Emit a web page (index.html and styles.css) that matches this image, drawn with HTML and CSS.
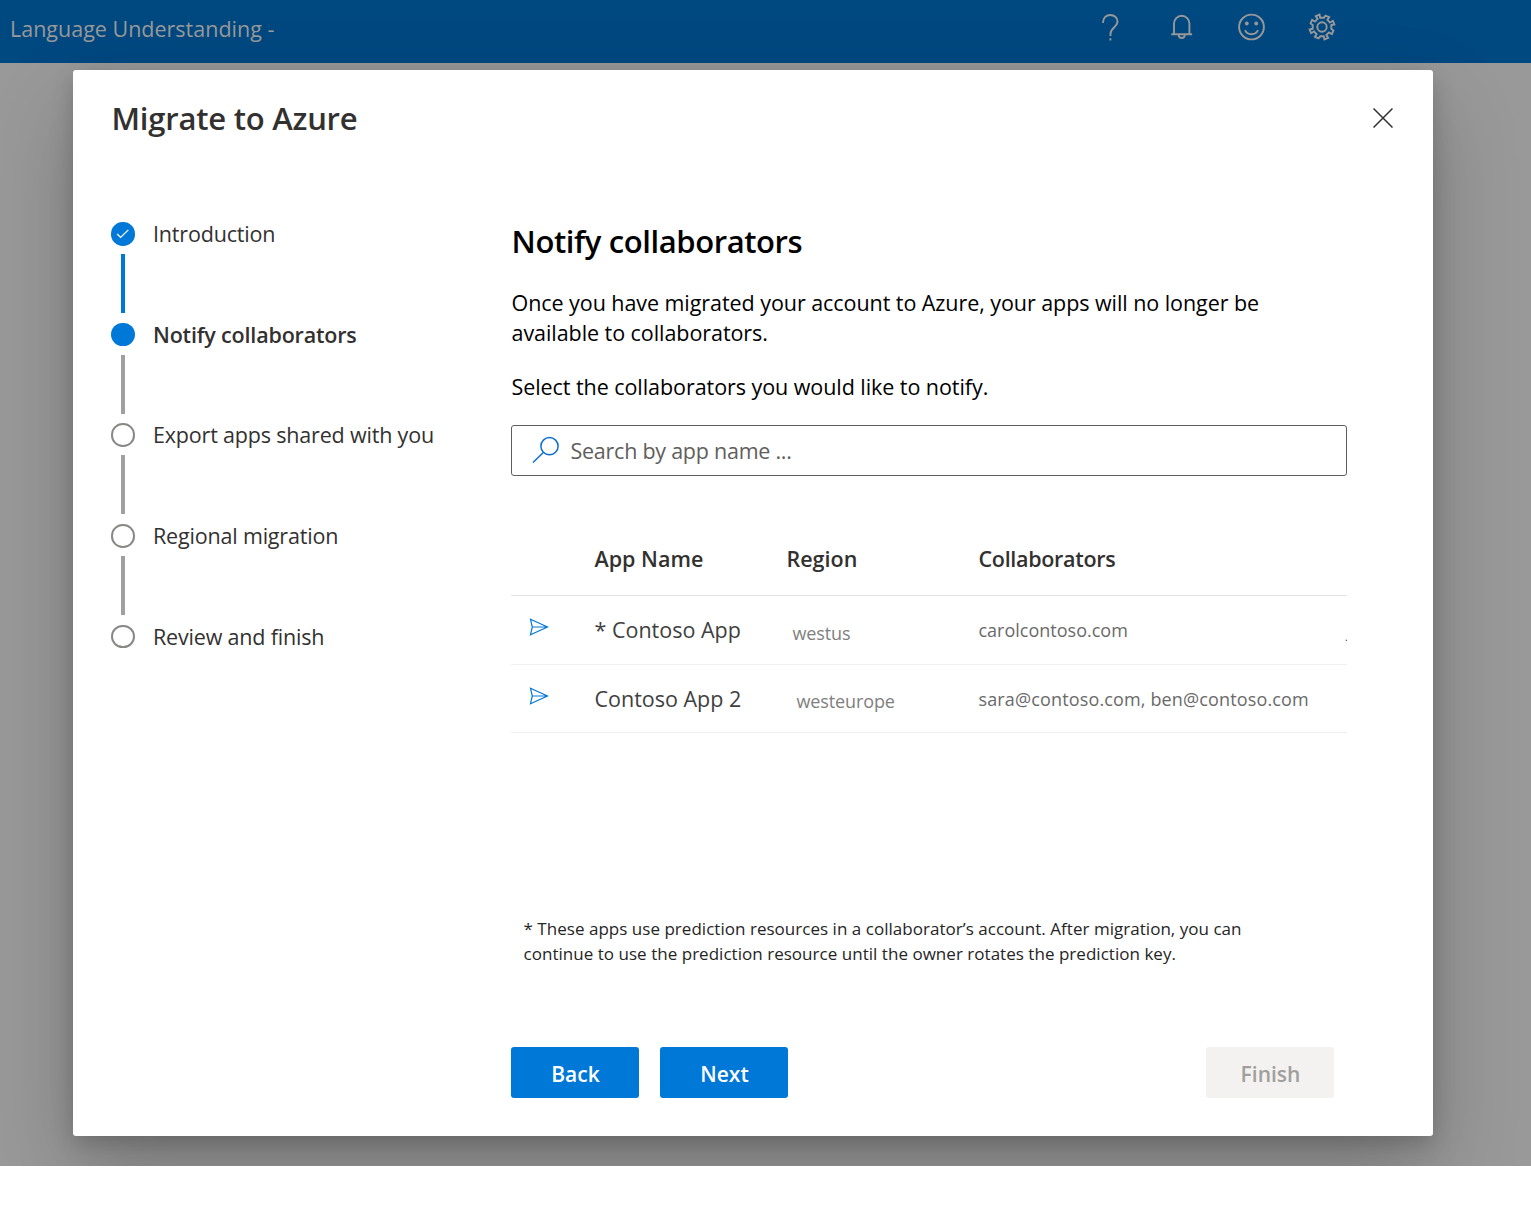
FILE: index.html
```html
<!DOCTYPE html>
<html lang="en">
<head>
<meta charset="utf-8">
<title>Language Understanding</title>
<link rel="stylesheet" href="styles.css">
</head>
<body>
<div class="app">
  <header class="topbar">
    <span class="brand">Language Understanding -</span>
    <nav class="tools">
      <svg class="tool" viewBox="0 0 30 30"><path d="M8 11C8 5.500 11.500 3 15.300 3s7.200 2.600 7.200 6.600c0 5.400-7 6.400-7 12V24M15.400 26.200v2.200"/></svg>
      <svg class="tool" viewBox="0 0 30 30"><path d="M5.300 22.300h20.800M8 22.300V11.500a7.700 7.700 0 0 1 15.400 0v10.800M12.700 23a3 3 0 0 0 6 0"/></svg>
      <svg class="tool" viewBox="0 0 30 30"><circle cx="15.500" cy="15" r="12.400"/><path d="M9 18.200a7.200 7.200 0 0 0 13 0"/><circle class="dot" cx="10.800" cy="11.500" r="1.900"/><circle class="dot" cx="20.200" cy="11.500" r="1.900"/></svg>
      <svg class="tool" viewBox="0 0 30 30"><circle cx="15" cy="15" r="4.700"/><path d="M13.200 5.800 12.500 2.600 8.800 4.100 10.600 6.900 7.900 9.600 5.100 7.800 3.600 11.400 5.700 12.900V16.700L2.600 17.500 4.100 21.200 7 19.500 9.600 22.100 7.900 24.900 11.500 26.400 13.300 24.300H16.700L17.500 27.400 21.200 25.900 19.400 23 22.100 20.400 24.900 22.100 26.400 18.500 24.300 16.800V13.100L27.400 12.500 25.900 8.800 23 10.600 20.400 7.900 22.200 5.100 18.500 3.600 16.900 5.800Z"/></svg>
    </nav>
  </header>
  <main class="stage">
    <section class="dialog">
      <div class="dialog-head">
        <h1 class="title">Migrate to Azure</h1>
        <svg class="close" viewBox="0 0 20 20"><path d="M.5.500l19 19M19.500.500l-19 19"/></svg>
      </div>
      <div class="dialog-body">
        <ol class="steps">
          <li class="step done"><span class="mark"><svg viewBox="0 0 24 24"><path d="M6.300 12.300l3.500 3.500L17.700 8"/></svg></span><span class="label">Introduction</span></li>
          <li class="step current"><span class="mark"></span><span class="label">Notify collaborators</span></li>
          <li class="step"><span class="mark"></span><span class="label">Export apps shared with you</span></li>
          <li class="step"><span class="mark"></span><span class="label">Regional migration</span></li>
          <li class="step"><span class="mark"></span><span class="label">Review and finish</span></li>
        </ol>
        <div class="content">
          <h2 class="heading">Notify collaborators</h2>
          <p class="intro">Once you have migrated your account to Azure, your apps will no longer be<br>available to collaborators.</p>
          <p class="intro">Select the collaborators you would like to notify.</p>
          <div class="search">
            <svg viewBox="0 0 28 28"><circle cx="17.500" cy="10.200" r="8.600"/><path d="M11.300 16.500L1 26.500"/></svg>
            <span>Search by app name ...</span>
          </div>
          <div class="table">
            <div class="row head"><span></span><span>App Name</span><span>Region</span><span class="last">Collaborators</span></div>
            <div class="row">
              <svg class="send" viewBox="0 0 20 18"><path d="M1.500 1.300L18.500 9 1.500 16.700 3.300 9zM3.300 9h15"/></svg>
              <span class="name">* Contoso App</span><span class="region">westus</span><span class="people">carolcontoso.com</span><span class="more">.</span>
            </div>
            <div class="row short">
              <svg class="send" viewBox="0 0 20 18"><path d="M1.500 1.300L18.500 9 1.500 16.700 3.300 9zM3.300 9h15"/></svg>
              <span class="name">Contoso App 2</span><span class="region">westeurope</span><span class="people">sara@contoso.com, ben@contoso.com</span>
            </div>
          </div>
          <p class="note">* These apps use prediction resources in a collaborator’s account. After migration, you can<br>continue to use the prediction resource until the owner rotates the prediction key.</p>
          <div class="actions">
            <button class="btn">Back</button>
            <button class="btn">Next</button>
            <button class="btn disabled" disabled>Finish</button>
          </div>
        </div>
      </div>
    </section>
  </main>
</div>
</body>
</html>
```
FILE: styles.css
```css
* { box-sizing: border-box; }

body {
  margin: 0;
  background: #fff;
  font-family: "Open Sans", "Noto Sans", sans-serif;
  font-size: 21.5px;
  color: #323130;
}

h1, h2, p, ol { margin: 0; padding: 0; font-weight: 400; }

.app {
  height: 1166px;
  overflow: hidden;
  background: #999;
}

.topbar {
  height: 63px;
  display: flex;
  justify-content: space-between;
  padding: 12px 194px 0 10px;
  background: #004880;
  color: #999;
}

.brand { line-height: 34px; white-space: nowrap; }

.tools { display: flex; gap: 40.600px; }

.tool {
  width: 30px;
  height: 30px;
  fill: none;
  stroke: #999;
  stroke-width: 1.900;
}

.tool .dot { fill: #999; stroke: none; }

.stage { padding: 7px 98px 30px 73px; }

.dialog {
  position: relative;
  height: 1066px;
  padding: 26px 39.500px 38px 38px;
  background: #fff;
  border-radius: 3px;
  box-shadow: 0 38px 86px rgba(0, 0, 0, .22), 0 7px 22px rgba(0, 0, 0, .18);
}

.dialog-head {
  display: flex;
  justify-content: space-between;
  align-items: flex-start;
  height: 126px;
}

.title {
  padding-left: .5px;
  font-size: 31px;
  font-weight: 600;
  line-height: 45px;
  letter-spacing: -.22px;
  white-space: nowrap;
}

.close {
  width: 20px;
  height: 20px;
  margin: 12px .5px 0 0;
  fill: none;
  stroke: #323130;
  stroke-width: 1.500;
}

.dialog-body { display: flex; }

.steps {
  width: 400px;
  list-style: none;
}

.step {
  display: grid;
  grid-template-columns: 24px 1fr;
  grid-template-rows: 24px 1fr;
  column-gap: 18px;
  height: 100.700px;
}

.step:not(:last-child)::after {
  content: "";
  grid-row: 2;
  width: 4px;
  height: 59px;
  margin: 8px 0 0 10px;
  background: #a0a0a0;
}

.step.done::after { background: #0078d7; }

.mark {
  width: 23.500px;
  height: 23.500px;
  border: 2.500px solid #8a8886;
  border-radius: 50%;
}

.done .mark, .current .mark { border: 0; background: #0078d7; }

.mark svg {
  display: block;
  fill: none;
  stroke: #fff;
  stroke-width: 1.300;
}

.label { line-height: 24px; letter-spacing: -.18px; white-space: nowrap; }

.current .label { font-weight: 600; }

.content { width: 836px; }

.heading {
  padding-left: .5px;
  font-size: 31px;
  font-weight: 600;
  line-height: 38px;
  letter-spacing: -.4px;
  color: #000;
}

.intro {
  margin-top: 24px;
  padding-left: .5px;
  line-height: 30px;
  letter-spacing: -.06px;
  color: #000;
  white-space: nowrap;
}

.heading + .intro { margin-top: 28px; }

.search {
  display: flex;
  align-items: center;
  gap: 10.500px;
  height: 51px;
  margin-top: 23px;
  padding: 0 0 1px 20px;
  border: 1px solid #605e5c;
  border-radius: 3px;
  letter-spacing: -.25px;
  color: #605e5c;
}

.search svg {
  width: 28px;
  height: 28px;
  fill: none;
  stroke: #0f6fcf;
  stroke-width: 1.500;
}

.table { margin-top: 47px; }

.row {
  display: grid;
  grid-template-columns: 83.500px 192px 192px 1fr 2px;
  height: 69px;
  border-bottom: 1px solid #f0f0f0;
  line-height: 68px;
  white-space: nowrap;
}

.row.short { height: 68px; }

.row.head {
  height: 73px;
  border-color: #e4e4e4;
  font-weight: 600;
  line-height: 72px;
}

.last { letter-spacing: -.3px; }

.send {
  width: 20px;
  height: 18px;
  margin: 22px 0 0 18px;
  fill: none;
  stroke: #0078d7;
  stroke-width: 1.200;
}

.name { color: #404040; }

.region {
  padding: 3px 0 0 6px;
  font-size: 18px;
  letter-spacing: -.12px;
  color: #808080;
}

.short .region { padding: 2px 0 0 10px; }

.people { font-size: 18px; color: #6a6a6a; }

.short .people { letter-spacing: .14px; }

.more { font-size: 10px; line-height: 83px; }

.note {
  margin: 183px 0 0 12.500px;
  font-size: 17px;
  line-height: 25px;
  letter-spacing: .03px;
  color: #252525;
  white-space: nowrap;
}

.actions {
  display: flex;
  gap: 21px;
  margin-top: 81px;
  padding-right: 13px;
}

.btn {
  width: 128px;
  height: 51px;
  padding: 0 0 0 1px;
  border: 0;
  border-radius: 3px;
  background: #0078d7;
  color: #fff;
  font: 600 21px/54px "Open Sans", "Noto Sans", sans-serif;
}

.btn.disabled { margin-left: auto; background: #f3f2f1; color: #a19f9d; }
```
